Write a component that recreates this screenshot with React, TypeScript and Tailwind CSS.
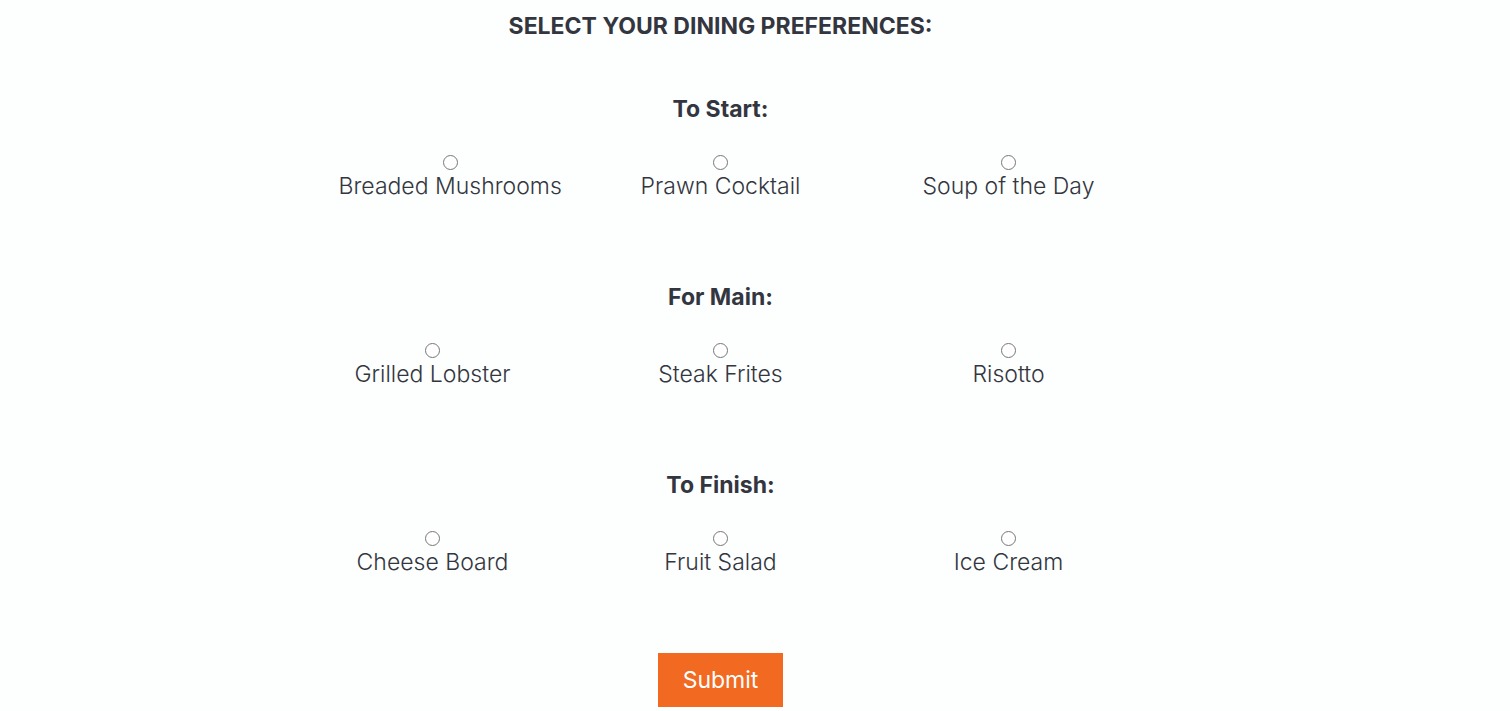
import { useState } from "react"

interface Course {
  name: string
  title: string
  options: string[]
}

const courses: Course[] = [
  { name: "starter", title: "To Start:", options: ["Breaded Mushrooms", "Prawn Cocktail", "Soup of the Day"] },
  { name: "main", title: "For Main:", options: ["Grilled Lobster", "Steak Frites", "Risotto"] },
  { name: "dessert", title: "To Finish:", options: ["Cheese Board", "Fruit Salad", "Ice Cream"] },
]

function CourseField({ course }: { course: Course }) {
  const [selected, setSelected] = useState("")

  return (
    <section className="mb-[83px]">
      <h2 className="font-bold">{course.title}</h2>
      <div className="mt-8 flex justify-center gap-[100px]">
        {course.options.map((option) => (
          // Long names run past the right edge of their column
          <div key={option} className="w-[188px]">
            <label className="flex w-max min-w-full flex-col items-center">
              <input
                type="radio"
                name={course.name}
                value={option}
                checked={selected === option}
                onChange={() => setSelected(option)}
                className="size-[15px]"
              />
              <span className="mt-0.5">{option}</span>
            </label>
          </div>
        ))}
      </div>
    </section>
  )
}

export default function App() {
  return (
    <main className="min-h-screen bg-[#fdfefe] pr-[69px] pt-3 font-['Inter',sans-serif] text-[23px] leading-7 font-light text-[#33363f]">
      <form className="text-center" onSubmit={(e) => e.preventDefault()}>
        <h1 className="mb-[55px] font-bold">SELECT YOUR DINING PREFERENCES:</h1>
        {courses.map((course) => (
          <CourseField key={course.name} course={course} />
        ))}
        <button type="submit" className="-mt-1.5 bg-[#f26922] px-[25px] py-[13px] font-normal text-white">
          Submit
        </button>
      </form>
    </main>
  )
}
